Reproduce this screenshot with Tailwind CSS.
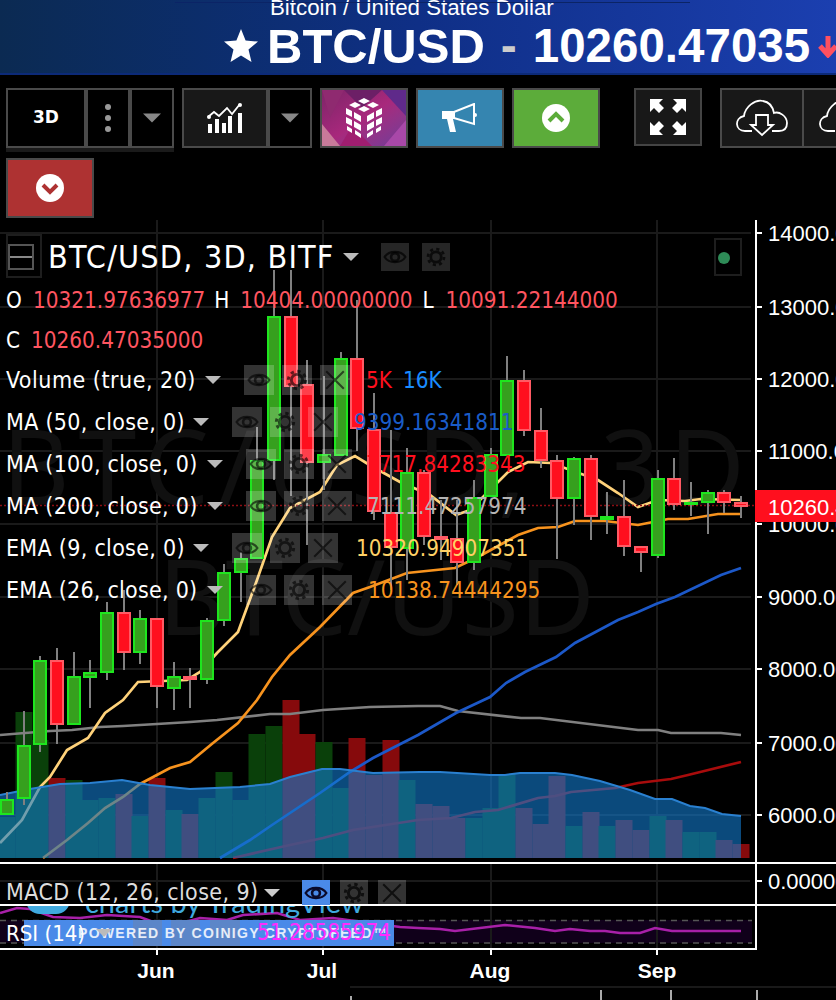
<!DOCTYPE html>
<html lang="en">

<head>
    <meta charset="UTF-8">
    <title>BTC/USD</title>
    <script src="https://cdn.jsdelivr.net/npm/@tailwindcss/browser@4"></script>
</head>

<body class="bg-black w-[836px] h-[1000px] overflow-hidden font-['DejaVu_Sans_Condensed','Noto_Sans',sans-serif] text-white">
    <!-- icon set -->
    <svg class="hidden">
        <symbol id="eye" viewBox="0 0 30 30">
            <path d="M3 15 C8 7 22 7 27 15 C22 23 8 23 3 15 Z" fill="none" stroke="currentColor" stroke-width="2.6" />
            <circle cx="15" cy="15" r="4.5" fill="none" stroke="currentColor" stroke-width="3" />
        </symbol>
        <symbol id="gear" viewBox="0 0 30 30">
            <circle cx="15" cy="15" r="6.5" fill="none" stroke="currentColor" stroke-width="3.4" />
            <circle cx="15" cy="15" r="10" fill="none" stroke="currentColor" stroke-width="3.4" stroke-dasharray="3.9 3.95" />
        </symbol>
        <symbol id="close" viewBox="0 0 30 30">
            <path d="M4 4 L26 26 M26 4 L4 26" fill="none" stroke="currentColor" stroke-width="2.6" />
        </symbol>
        <symbol id="caret" viewBox="0 0 16 8">
            <polygon points="0,0 16,0 8,8" fill="currentColor" />
        </symbol>
    </svg>

    <!-- Header -->
    <header class="relative h-[75px] overflow-hidden border-b-2 border-[#0c2a78] bg-gradient-to-r from-[#0b2a52] via-[#0f2f86] to-[#1b3fb0] font-['Liberation_Sans',sans-serif]">
        <div class="absolute left-[175px] top-[2px] w-[515px] h-[1px] bg-[#0b2466]"></div>
        <div class="pl-[270px] -mt-[4px] text-[22.3px] leading-[24px] h-[20px] whitespace-nowrap">Bitcoin / United States Dollar</div>
        <div class="flex items-center pl-[224px] mt-[3px] whitespace-nowrap font-bold">
            <svg class="w-[34px] h-[34px] mr-[9px] shrink-0" viewBox="0 0 34 34">
                <polygon points="17,0 21.6,11.6 34,12.6 24.5,20.6 27.5,33 17,26.4 6.5,33 9.5,20.6 0,12.6 12.4,11.6" fill="#fff" />
            </svg>
            <span class="text-[49px] leading-[54px]">BTC/USD</span>
            <span class="text-[48px] leading-[54px] ml-[16px] text-[#cccccc]">-</span>
            <span class="text-[47.5px] leading-[54px] ml-[16px]">10260.47035</span>
            <svg class="w-[20px] h-[24px] ml-[8px] shrink-0" viewBox="0 0 20 24">
                <path d="M10 2 V20 M2 12 L10 21 L18 12" fill="none" stroke="#ff5060" stroke-width="5" />
            </svg>
        </div>
    </header>

    <!-- Toolbar -->
    <div class="h-[145px] pt-[13px] pl-[6px] flex flex-col gap-[6px]">
        <div class="flex items-start h-[64px] w-[830px] overflow-hidden">
            <div class="shrink-0 h-[64px] border-b-4 border-[#1a1a1a]">
                <div class="flex h-[60px] border-2 border-[#4a4a4a] bg-black">
                    <div class="w-[76px] flex items-center justify-center font-['DejaVu_Sans',sans-serif] font-bold text-[17px]">3D</div>
                    <div class="w-[44px] border-l-4 border-[#4a4a4a] flex flex-col items-center justify-center gap-[5px]">
                        <span class="w-[6px] h-[6px] rounded-full bg-[#999999]"></span>
                        <span class="w-[6px] h-[6px] rounded-full bg-[#999999]"></span>
                        <span class="w-[6px] h-[6px] rounded-full bg-[#999999]"></span>
                    </div>
                    <div class="w-[44px] border-l-4 border-[#4a4a4a] flex items-center justify-center text-[#888888]">
                        <svg class="w-[18px] h-[10px]"><use href="#caret" /></svg>
                    </div>
                </div>
            </div>
            <div class="flex shrink-0 h-[60px] ml-[8px] border-2 border-[#4a4a4a]">
                <div class="w-[82px] bg-[#181818] flex items-center justify-center">
                    <svg class="w-[36px] h-[32px]" viewBox="0 0 36 32">
                        <path d="M1 15 L7 10 L12 14 L20 6 L25 12 L33 2" fill="none" stroke="#fff" stroke-width="1.8" />
                        <circle cx="33" cy="3" r="2" fill="#fff" /><circle cx="2" cy="15" r="2" fill="#fff" />
                        <path d="M1 22h4v9H1z M8 17h4v14H8z M15 21h4v10h-4z M21 14h4v17h-4z M31 11h4v20h-4z" fill="#fff" />
                    </svg>
                </div>
                <div class="w-[44px] border-l-4 border-[#4a4a4a] flex items-center justify-center text-[#888888]">
                    <svg class="w-[18px] h-[10px]"><use href="#caret" /></svg>
                </div>
            </div>
            <div class="relative shrink-0 w-[88px] h-[60px] ml-[8px] border-2 border-[#4a4a4a] bg-gradient-to-br from-[#7d2468] via-[#a8287c] to-[#6f3a9a] flex items-center justify-center overflow-hidden">
                <svg class="absolute inset-0 w-[84px] h-[56px]" viewBox="0 0 84 56">
                    <polygon points="0,0 22,0 8,28" fill="#8f2a70" />
                    <polygon points="0,34 18,56 0,56" fill="#c87a9a" />
                    <polygon points="18,56 50,56 30,36" fill="#a01e70" />
                    <polygon points="60,0 84,0 84,26" fill="#5f2a8a" />
                    <polygon points="62,56 84,30 84,56" fill="#a848a8" />
                    <polygon points="22,0 60,0 40,18" fill="#6c1f66" />
                </svg>
                <svg class="relative w-[40px] h-[42px]" viewBox="0 0 40 42" fill="#fff">
                    <path d="M20 1 L26 4 L20 7 L14 4 Z M11 5 L17 8 L11 11 L5 8 Z M29 5 L35 8 L29 11 L23 8 Z M20 9 L26 12 L20 15 L14 12 Z" />
                    <path d="M2 11 L8 14 V20 L2 17 Z M10 15 L17 19 V25 L10 21 Z M2 20 L8 23 V29 L2 26 Z M10 24 L17 28 V34 L10 30 Z M3 29 L8 32 V36 L3 33 Z M11 33 L17 37 V41 L11 37 Z" />
                    <path d="M38 11 L32 14 V20 L38 17 Z M30 15 L23 19 V25 L30 21 Z M38 20 L32 23 V29 L38 26 Z M30 24 L23 28 V34 L30 30 Z M37 29 L32 32 V36 L37 33 Z M29 33 L23 37 V41 L29 37 Z" />
                </svg>
            </div>
            <div class="shrink-0 w-[88px] h-[60px] ml-[8px] border-2 border-[#4a4a4a] bg-[#3585b0] flex items-center justify-center">
                <svg class="w-[36px] h-[30px]" viewBox="0 0 36 30" fill="#fff">
                    <path d="M1 9 H12 L32 1 V21 L12 15 V15 H1 Z" fill="none" stroke="#fff" stroke-width="2" />
                    <path d="M1 8 H13 V16 H1 Z M5 16 H11 L14 29 H8 Z" />
                    <circle cx="33" cy="12" r="2" />
                </svg>
            </div>
            <div class="shrink-0 w-[88px] h-[60px] ml-[8px] border-2 border-[#4a4a4a] bg-[#5cac3a] flex items-center justify-center">
                <svg class="w-[28px] h-[28px]" viewBox="0 0 28 28">
                    <circle cx="14" cy="14" r="14" fill="#fff" />
                    <path d="M7 17 L14 10 L21 17" fill="none" stroke="#5cac3a" stroke-width="4" />
                </svg>
            </div>
            <div class="shrink-0 w-[68px] h-[58px] ml-[34px] border-2 border-[#444444] bg-[#181818] flex items-center justify-center">
                <svg class="w-[36px] h-[36px]" viewBox="0 0 36 36" fill="#fff">
                    <path d="M0 0 H13 L9 4 L14 9 L9 14 L4 9 L0 13 Z M36 0 H23 L27 4 L22 9 L27 14 L32 9 L36 13 Z M0 36 H13 L9 32 L14 27 L9 22 L4 27 L0 23 Z M36 36 H23 L27 32 L22 27 L27 22 L32 27 L36 23 Z" />
                </svg>
            </div>
            <div class="shrink-0 w-[84px] h-[60px] ml-[18px] border-2 border-[#4a4a4a] bg-[#181818] flex items-center justify-center">
                <svg class="w-[54px] h-[38px]" viewBox="0 0 54 38">
                    <path d="M17 32 H10 C0 32 -1 19 9 17 C10 8 20 0 28 2 C35 3 38 9 39 14 C44 12 52 17 52 24 C52 30 48 32 44 32 H37" fill="none" stroke="#fff" stroke-width="1.8" />
                    <path d="M21 16 H33 V26 H38 L27 36 L16 26 H21 Z" fill="none" stroke="#fff" stroke-width="1.8" />
                </svg>
            </div>
            <div class="shrink-0 w-[84px] h-[60px] -ml-[2px] border-2 border-[#4a4a4a] bg-[#181818] pl-[14px] flex items-center">
                <svg class="w-[54px] h-[38px] shrink-0" viewBox="0 0 54 38">
                    <path d="M17 32 H10 C0 32 -1 19 9 17 C10 8 20 0 28 2 C35 3 38 9 39 14 C44 12 52 17 52 24 C52 30 48 32 44 32 H37" fill="none" stroke="#fff" stroke-width="1.8" />
                </svg>
            </div>
        </div>
        <div class="w-[88px] h-[60px] border-2 border-[#4a4a4a] bg-[#ae3232] flex items-center justify-center">
            <svg class="w-[28px] h-[28px]" viewBox="0 0 28 28">
                <circle cx="14" cy="14" r="14" fill="#fff" />
                <path d="M7 11 L14 18 L21 11" fill="none" stroke="#ae3232" stroke-width="4" />
            </svg>
        </div>
    </div>

    <!-- Chart: SVG uses page coordinates through its viewBox -->
    <div class="relative w-[836px] h-[780px]">
        <svg id="chart" class="absolute inset-0" width="836" height="780" viewBox="0 220 836 780" font-family="'Liberation Sans', sans-serif">
            <g id="grid" stroke="#1a1a1a" stroke-width="2"></g>
            <g fill="#101010" font-family="'Noto Sans', sans-serif" font-size="104">
                <text x="2" y="505" word-spacing="30" letter-spacing="9">BTC/USD, 3D</text>
                <text x="158" y="635">BTC/USD</text>
            </g>
            <g id="volume"></g>
            <g id="lines" fill="none" stroke-width="2.7"></g>
            <polygon id="area" fill="#127bcf" fill-opacity="0.6"></polygon>
            <polyline id="areaLine" fill="none" stroke="#2a80d0" stroke-width="2"></polyline>
            <line x1="0" y1="505.5" x2="755" y2="505.5" stroke="#8c0f14" stroke-width="1.5" stroke-dasharray="2 2" />
            <g id="candles"></g>

            <!-- lower panes -->
            <rect x="0" y="864" width="756" height="41" fill="#000" />
            <rect x="0" y="906" width="756" height="42" fill="#000" />
            <line x1="0" y1="881" x2="750" y2="881" stroke="#1a1a1a" stroke-width="2" />
            <rect x="0" y="920" width="752" height="23" fill="#10001a" />
            <path d="M0 920.5 H752 M0 943 H752" stroke="#555" stroke-width="1.5" stroke-dasharray="6 5" />
            <path d="M157 864 V948 M323 864 V948 M491 864 V948 M657 864 V948" stroke="#1a1a1a" stroke-width="2" />
            <polyline points="0,913 17,908 30,909 53,917 80,918 107,915 140,917 167,927 200,918 227,920 243,915 277,913 300,920 333,918 400,927 418,928 440,929 455,931 505,925 535,928 555,931 570,929 590,931 605,931 620,933 640,933 655,928 672,931 721,931 741,931" fill="none" stroke="#a820a8" stroke-width="2.6" />

            <!-- pane borders and price axis -->
            <rect x="0" y="862" width="836" height="2" fill="#fff" />
            <rect x="0" y="904" width="836" height="2" fill="#fff" />
            <rect x="0" y="948" width="756" height="2" fill="#fff" />
            <rect x="755" y="220" width="2" height="730" fill="#fff" />
            <path d="M157 950 V955 M323 950 V955 M491 950 V955 M657 950 V955" stroke="#fff" stroke-width="2" />
            <g id="axis" fill="#fff" font-size="22"></g>
            <rect x="755" y="490" width="81" height="32" fill="#ff0f1e" />
            <text x="768" y="515" fill="#fff" font-size="22">10260.47</text>
            <text x="768" y="889" fill="#fff" font-size="22">0.00000</text>
            <g fill="#fff" font-size="21" font-weight="bold" text-anchor="middle">
                <text x="156" y="978">Jun</text>
                <text x="322" y="978">Jul</text>
                <text x="490" y="978">Aug</text>
                <text x="657" y="978">Sep</text>
            </g>
            <path d="M350 987 H836" stroke="#222" stroke-width="1.5" />
            <path d="M351 996 V1000 M601 990 V1000 M671 990 V1000 M757 990 V1000" stroke="#aaa" stroke-width="2" />
        </svg>

        <!-- TradingView mark clipped by the RSI pane -->
        <div class="absolute left-0 top-[686px] w-[400px] h-[14px] overflow-hidden text-[#3fa9df] font-['Lato',sans-serif] text-[29px] leading-[30px]">
            <div class="absolute left-[26px] -top-[14px] w-[44px] h-[22px] rounded-b-[14px] bg-[#3fa9df]"></div>
            <div class="absolute left-[85px] -top-[19px] whitespace-nowrap">charts by TradingView</div>
        </div>

        <!-- Legend overlay -->
        <div class="absolute left-0 top-[14px] flex flex-col text-[22.3px] leading-[42px] whitespace-nowrap">
            <div class="relative flex items-center h-[46px]">
                <div class="absolute left-[6px] top-[0px] w-[36px] h-[44px] border-2 border-[#1e1e1e]"></div>
                <div class="ml-[8px] w-[26px] h-[26px] border-2 border-[#555555] flex items-center">
                    <span class="w-full h-[2px] bg-[#888888]"></span>
                </div>
                <span class="ml-[14px] text-[32px] tracking-[1.2px] leading-[46px]">BTC/USD, 3D, BITF</span>
                <svg class="w-[16px] h-[8px] ml-[8px] text-[#bbbbbb]"><use href="#caret" /></svg>
                <span class="ml-[22px] w-[28px] h-[28px] bg-white/15 flex items-center justify-center text-black/70"><svg class="w-[26px] h-[26px]"><use href="#eye" /></svg></span>
                <span class="ml-[13px] w-[28px] h-[28px] bg-white/15 flex items-center justify-center text-black/70"><svg class="w-[24px] h-[24px]"><use href="#gear" /></svg></span>
            </div>
            <div class="flex h-[40px] pl-[6px] leading-[40px]">
                <span class="w-[27px]">O</span><span class="text-[#ff5560]">10321.97636977</span>
                <span class="ml-[9px] w-[26px]">H</span><span class="text-[#ff5560]">10404.00000000</span>
                <span class="ml-[10px] w-[23px]">L</span><span class="text-[#ff5560]">10091.22144000</span>
            </div>
            <div class="flex h-[40px] pl-[6px] leading-[40px]">
                <span class="w-[25px]">C</span><span class="text-[#ff5560]">10260.47035000</span>
            </div>

            <div class="flex items-center h-[42px] pl-[6px] -mt-[1px]">
                <span class="w-[190px] text-[23px] tracking-[.5px]">Volume (true, 20)</span>
                <svg class="w-[16px] h-[8px] ml-[9px] text-[#bbbbbb]"><use href="#caret" /></svg>
                <div class="flex gap-[8px] ml-[23px]">
                    <span class="w-[30px] h-[30px] bg-white/20 flex items-center justify-center text-black/60"><svg class="w-[26px] h-[26px]"><use href="#eye" /></svg></span>
                    <span class="w-[30px] h-[30px] bg-white/20 flex items-center justify-center text-black/60"><svg class="w-[26px] h-[26px]"><use href="#gear" /></svg></span>
                    <span class="w-[30px] h-[30px] bg-white/20 flex items-center justify-center text-black/60"><svg class="w-[24px] h-[24px]"><use href="#close" /></svg></span>
                </div>
                <span class="ml-[16px] text-[#ff0f1e]">5K</span>
                <span class="ml-[11px] text-[#1a8cff]">16K</span>
            </div>
            <div class="flex items-center h-[42px] pl-[6px]">
                <span class="w-[178px] text-[23px] tracking-[.3px]">MA (50, close, 0)</span>
                <svg class="w-[16px] h-[8px] ml-[9px] text-[#bbbbbb]"><use href="#caret" /></svg>
                <div class="flex gap-[8px] ml-[23px]">
                    <span class="w-[30px] h-[30px] bg-white/20 flex items-center justify-center text-black/60"><svg class="w-[26px] h-[26px]"><use href="#eye" /></svg></span>
                    <span class="w-[30px] h-[30px] bg-white/20 flex items-center justify-center text-black/60"><svg class="w-[26px] h-[26px]"><use href="#gear" /></svg></span>
                    <span class="w-[30px] h-[30px] bg-white/20 flex items-center justify-center text-black/60"><svg class="w-[24px] h-[24px]"><use href="#close" /></svg></span>
                </div>
                <span class="ml-[16px] text-[#1a5cc8]">9399.16341811</span>
            </div>
            <div class="flex items-center h-[42px] pl-[6px]">
                <span class="w-[192px] text-[23px] tracking-[.25px]">MA (100, close, 0)</span>
                <svg class="w-[16px] h-[8px] ml-[9px] text-[#bbbbbb]"><use href="#caret" /></svg>
                <div class="flex gap-[8px] ml-[23px]">
                    <span class="w-[30px] h-[30px] bg-white/20 flex items-center justify-center text-black/60"><svg class="w-[26px] h-[26px]"><use href="#eye" /></svg></span>
                    <span class="w-[30px] h-[30px] bg-white/20 flex items-center justify-center text-black/60"><svg class="w-[26px] h-[26px]"><use href="#gear" /></svg></span>
                    <span class="w-[30px] h-[30px] bg-white/20 flex items-center justify-center text-black/60"><svg class="w-[24px] h-[24px]"><use href="#close" /></svg></span>
                </div>
                <span class="ml-[14px] text-[#ff0f1e]">7717.84283343</span>
            </div>
            <div class="flex items-center h-[42px] pl-[6px]">
                <span class="w-[192px] text-[23px] tracking-[.25px]">MA (200, close, 0)</span>
                <svg class="w-[16px] h-[8px] ml-[9px] text-[#bbbbbb]"><use href="#caret" /></svg>
                <div class="flex gap-[8px] ml-[23px]">
                    <span class="w-[30px] h-[30px] bg-white/20 flex items-center justify-center text-black/60"><svg class="w-[26px] h-[26px]"><use href="#eye" /></svg></span>
                    <span class="w-[30px] h-[30px] bg-white/20 flex items-center justify-center text-black/60"><svg class="w-[26px] h-[26px]"><use href="#gear" /></svg></span>
                    <span class="w-[30px] h-[30px] bg-white/20 flex items-center justify-center text-black/60"><svg class="w-[24px] h-[24px]"><use href="#close" /></svg></span>
                </div>
                <span class="ml-[15px] text-[#b4b4b4]">7111.47257974</span>
            </div>
            <div class="flex items-center h-[42px] pl-[6px]">
                <span class="w-[178px] text-[23px] tracking-[.3px]">EMA (9, close, 0)</span>
                <svg class="w-[16px] h-[8px] ml-[9px] text-[#bbbbbb]"><use href="#caret" /></svg>
                <div class="flex gap-[8px] ml-[23px]">
                    <span class="w-[30px] h-[30px] bg-white/20 flex items-center justify-center text-black/60"><svg class="w-[26px] h-[26px]"><use href="#eye" /></svg></span>
                    <span class="w-[30px] h-[30px] bg-white/20 flex items-center justify-center text-black/60"><svg class="w-[26px] h-[26px]"><use href="#gear" /></svg></span>
                    <span class="w-[30px] h-[30px] bg-white/20 flex items-center justify-center text-black/60"><svg class="w-[24px] h-[24px]"><use href="#close" /></svg></span>
                </div>
                <span class="ml-[18px] text-[#ffd166]">10320.94907351</span>
            </div>
            <div class="flex items-center h-[42px] pl-[6px]">
                <span class="w-[192px] text-[23px] tracking-[.25px]">EMA (26, close, 0)</span>
                <svg class="w-[16px] h-[8px] ml-[9px] text-[#bbbbbb]"><use href="#caret" /></svg>
                <div class="flex gap-[8px] ml-[23px]">
                    <span class="w-[30px] h-[30px] bg-white/20 flex items-center justify-center text-black/60"><svg class="w-[26px] h-[26px]"><use href="#eye" /></svg></span>
                    <span class="w-[30px] h-[30px] bg-white/20 flex items-center justify-center text-black/60"><svg class="w-[26px] h-[26px]"><use href="#gear" /></svg></span>
                    <span class="w-[30px] h-[30px] bg-white/20 flex items-center justify-center text-black/60"><svg class="w-[24px] h-[24px]"><use href="#close" /></svg></span>
                </div>
                <span class="ml-[16px] text-[#f7931e]">10138.74444295</span>
            </div>
        </div>

        <!-- MACD legend -->
        <div class="absolute left-[6px] top-[660px] h-[25px] flex items-center text-[23px] tracking-[.4px] text-[#dddddd] whitespace-nowrap overflow-hidden">
            <span class="w-[250px]">MACD (12, 26, close, 9)</span>
            <svg class="w-[16px] h-[8px] ml-[8px] text-[#cccccc]"><use href="#caret" /></svg>
            <div class="flex gap-[10px] ml-[22px]">
                <span class="w-[28px] h-[25px] bg-[#4a8ae8] flex items-center justify-center text-[#0a0a2a]"><svg class="w-[26px] h-[26px]"><use href="#eye" /></svg></span>
                <span class="w-[28px] h-[25px] bg-white/20 flex items-center justify-center text-black/70"><svg class="w-[26px] h-[26px]"><use href="#gear" /></svg></span>
                <span class="w-[28px] h-[25px] bg-white/20 flex items-center justify-center text-black/70"><svg class="w-[24px] h-[24px]"><use href="#close" /></svg></span>
            </div>
        </div>

        <!-- RSI legend with the feed strip over it -->
        <div class="absolute left-[24px] top-[700px] w-[370px] h-[26px] bg-[#4a8ae8] overflow-hidden">
            <div class="absolute left-[109px] top-0 w-[29px] h-[26px] bg-[#5c86c8]"></div>
            <div class="absolute left-[147px] top-0 w-[29px] h-[26px] bg-[#5c86c8]"></div>
            <div class="absolute left-[186px] top-0 w-[30px] h-[26px] bg-[#5c86c8]"></div>
            <div class="absolute left-[54px] top-0 h-[26px] leading-[26px] font-['Liberation_Sans',sans-serif] font-bold text-[14px] tracking-[1.3px] text-white/85 whitespace-nowrap">POWERED BY COINIGY CRYPTOFEED™</div>
        </div>
        <div class="absolute left-[6px] top-[700px] h-[26px] flex items-center gap-[8px] text-[22px] whitespace-nowrap">
            <span class="w-[82px]">RSI (14)</span>
            <svg class="w-[16px] h-[8px] text-[#bbbbbb]"><use href="#caret" /></svg>
        </div>
        <div class="absolute left-[257px] top-[700px] h-[26px] flex items-center text-[22.3px] text-[#ff2aff] whitespace-nowrap">51.28585974</div>

        <!-- Connection status -->
        <div class="absolute left-[714px] top-[18px] w-[28px] h-[38px] border-2 border-[#1e1e1e] flex items-center justify-center pr-[8px] pt-[2px]">
            <span class="w-[12px] h-[12px] rounded-full bg-[#2e8b57] shrink-0"></span>
        </div>
    </div>

    <script>
        const NS = 'http://www.w3.org/2000/svg';
        const add = (parent, tag, attrs, text) => {
            const el = document.createElementNS(NS, tag);
            Object.keys(attrs).forEach(k => el.setAttribute(k, attrs[k]));
            if (text) el.textContent = text;
            document.getElementById(parent).appendChild(el);
        };
        const step = 16.68;
        const cx = i => Math.round(7 + step * i);

        // grid + axis
        [157, 323, 491, 657].forEach(x => add('grid', 'line', { x1: x, y1: 220, x2: x, y2: 858 }));
        [[14000, 233], [13000, 307], [12000, 379], [11000, 451], [10000, 524], [9000, 597], [8000, 669], [7000, 743], [6000, 815]].forEach(([p, y]) => {
            add('grid', 'line', { x1: 0, y1: y, x2: 751, y2: y });
            add('axis', 'rect', { x: 755, y: y - 1, width: 7, height: 2 });
            add('axis', 'text', { x: 768, y: y + 8 }, p + '.000');
        });
        add('axis', 'rect', { x: 755, y: 880, width: 7, height: 2 });

        // volume bars [top y, g/r]
        const vol = [[817, 'g'], [712, 'g'], [740, 'g'], [778, 'r'], [780, 'g'], [800, 'g'], [798, 'g'], [794, 'r'], [816, 'g'], [778, 'r'], [810, 'g'], [814, 'r'], [798, 'g'], [772, 'g'], [800, 'g'], [734, 'g'], [726, 'g'], [700, 'r'], [734, 'r'], [742, 'g'], [788, 'g'], [738, 'r'], [775, 'r'], [740, 'r'], [780, 'g'], [804, 'r'], [806, 'r'], [818, 'r'], [818, 'g'], [808, 'g'], [774, 'g'], [808, 'r'], [824, 'r'], [776, 'r'], [826, 'g'], [812, 'r'], [826, 'g'], [820, 'r'], [830, 'r'], [816, 'g'], [820, 'r'], [832, 'g'], [832, 'g'], [840, 'r'], [844, 'r']];
        vol.forEach(([top, c], i) => add('volume', 'rect', {
            x: cx(i) - 8.5, y: top, width: 17, height: 858 - top,
            fill: c === 'g' ? '#0a400a' : '#860a0c'
        }));

        // moving averages
        const poly = (color, pts) => add('lines', 'polyline', { points: pts, stroke: color });
        poly('#808080', '0,735 50,731 72,730 100,727 123,726 157,724 190,722 217,720 270,714 290,714 323,710 370,707 418,706 440,706 458,711 521,718 540,718 638,730 658,730 671,733 721,733 741,735');
        poly('#a80c0c', '233,858 290,845 323,838 353,830 418,820 451,818 475,812 498,810 538,798 555,796 571,792 615,788 638,783 671,779 688,775 741,762');
        poly('#1c58c8', '220,858 250,840 272,825 320,793 350,772 373,758 418,735 456,713 490,697 506,683 525,672 556,657 575,643 618,620 638,612 656,604 675,597 721,575 741,568');
        poly('#f7931e', '43,858 67,840 88,823 105,808 123,797 140,784 170,768 190,762 213,743 238,723 257,700 272,677 290,655 320,627 353,593 370,587 407,573 455,568 478,557 518,535 538,528 558,527 575,521 605,521 638,525 668,519 688,519 718,514 741,514');
        poly('#ffd27a', '0,843 22,820 40,787 50,777 67,750 88,738 105,713 123,700 138,682 187,680 200,672 217,653 238,632 257,580 272,537 290,508 320,492 337,465 355,456 373,467 400,482 430,495 456,515 470,510 490,490 508,472 528,462 551,463 598,480 618,493 638,507 658,500 685,501 701,499 741,500');

        // volume MA area
        const areaPts = '0,795 30,789 60,784 90,783 122,780 150,785 190,789 240,787 270,784 290,777 322,769 340,769 373,773 420,772 440,772 457,773 490,775 505,775 520,773 555,773 572,775 600,781 630,790 655,799 672,799 690,806 705,808 722,814 741,816';
        document.getElementById('area').setAttribute('points', areaPts + ' 741,858 0,858');
        document.getElementById('areaLine').setAttribute('points', areaPts);

        // candles [bodyTop, bodyBottom, wickTop, wickBottom, g/r]
        const candles = [
            [799, 815, 792, 815, 'g'], [745, 799, 711, 805, 'g'], [660, 745, 656, 752, 'g'], [660, 725, 648, 744, 'r'], [676, 725, 652, 725, 'g'],
            [672, 678, 660, 708, 'g'], [612, 673, 602, 680, 'g'], [612, 653, 590, 670, 'r'], [618, 653, 610, 664, 'g'], [618, 687, 618, 708, 'r'],
            [676, 689, 662, 710, 'g'], [676, 680, 668, 708, 'r'], [620, 680, 618, 684, 'g'], [572, 621, 564, 626, 'g'], [558, 573, 552, 602, 'g'],
            [460, 559, 427, 559, 'g'], [316, 461, 270, 480, 'g'], [316, 387, 270, 496, 'r'], [384, 463, 360, 545, 'r'], [454, 463, 376, 490, 'g'],
            [358, 456, 352, 456, 'g'], [358, 429, 300, 451, 'r'], [429, 512, 393, 520, 'r'], [512, 548, 430, 590, 'r'], [472, 549, 448, 580, 'g'],
            [472, 537, 470, 545, 'r'], [536, 540, 500, 560, 'r'], [538, 563, 500, 585, 'r'], [497, 563, 480, 570, 'g'], [454, 497, 448, 497, 'g'],
            [380, 456, 356, 456, 'g'], [380, 431, 370, 436, 'r'], [430, 461, 408, 468, 'r'], [460, 499, 455, 559, 'r'], [458, 499, 457, 525, 'g'],
            [458, 517, 455, 540, 'r'], [516, 520, 492, 534, 'g'], [516, 547, 480, 556, 'r'], [546, 553, 546, 572, 'r'], [478, 556, 470, 558, 'g'],
            [478, 505, 458, 510, 'r'], [502, 504, 482, 516, 'g'], [492, 503, 490, 534, 'g'], [492, 503, 490, 513, 'r'], [502, 507, 496, 518, 'r']
        ];
        candles.forEach(([t, b, wt, wb, c], i) => {
            const x = cx(i);
            add('candles', 'line', { x1: x, y1: wt, x2: x, y2: wb, stroke: '#808080', 'stroke-width': 2 });
            add('candles', 'rect', {
                x: x - 6, y: t + 1, width: 12, height: Math.max(b - t - 2, 1),
                fill: c === 'g' ? '#36a01e' : '#ff0f1e',
                stroke: c === 'g' ? '#1ee61e' : '#ff5a64', 'stroke-width': 2
            });
        });
    </script>
</body>

</html>
